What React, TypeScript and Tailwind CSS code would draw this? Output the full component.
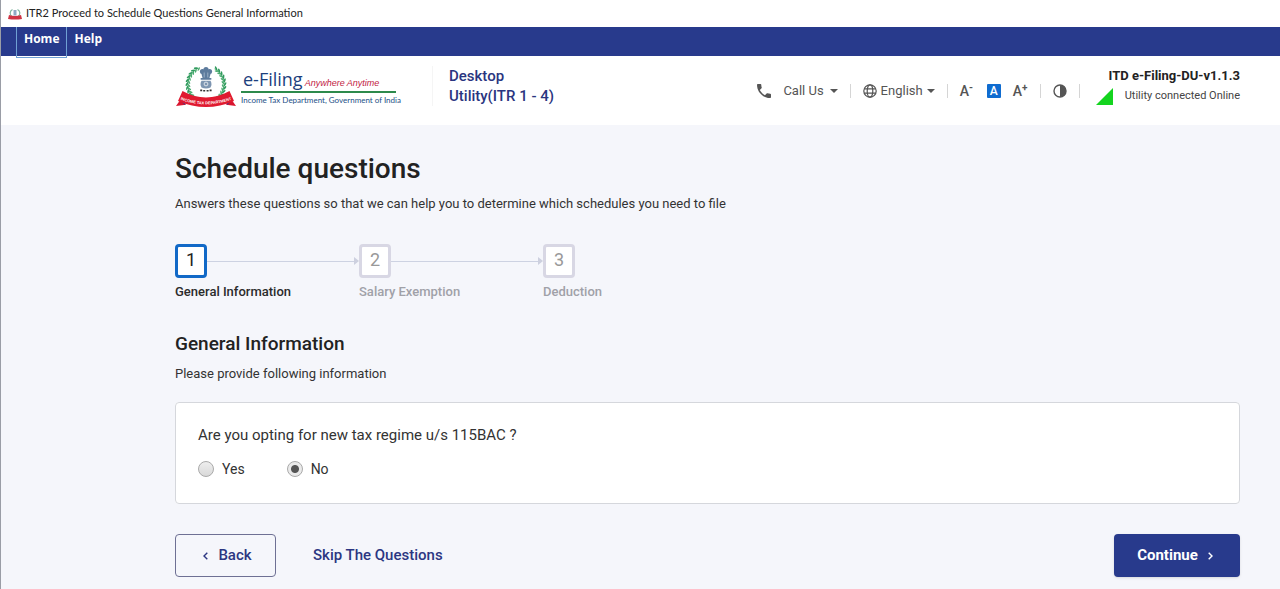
import { useState } from "react";

function Emblem({ className }: { className: string }) {
  const leaves = Array.from({ length: 27 }, (_, i) => 32 + i * 11.4);
  return (
    <svg viewBox="0 0 62 44" className={className} aria-hidden="true">
      <circle cx="31" cy="20.500" r="18" fill="none" stroke="#6fbb8c" strokeWidth="1" strokeDasharray="92 30" transform="rotate(-62 31 20.500)" />
      {leaves.map((deg) => (
        <g key={deg} transform={`rotate(${deg} 31 20.500) translate(31 1.400)`}>
          <ellipse cx="0" cy="0" rx="2.200" ry="0.900" fill="#2f9a5d" transform="rotate(30)" />
          <ellipse cx="0.600" cy="2.800" rx="2" ry="0.800" fill="#4aab70" transform="rotate(-30)" />
        </g>
      ))}
      <g fill="#5d7b9d">
        <circle cx="31" cy="5.600" r="2.600" />
        <circle cx="27.400" cy="7.600" r="2.500" />
        <circle cx="34.600" cy="7.600" r="2.500" />
        <path d="M26 8h10l-1.800 7h-6.400z" />
        <rect x="25.500" y="14" width="11" height="1.800" rx="0.800" />
        <path d="M26.500 16.800q-2 3.500 0 6.700q4.500 2.200 9 0q2-3.200 0-6.700z" opacity="0.800" />
      </g>
      <circle cx="31" cy="20" r="1.900" fill="none" stroke="#fff" strokeWidth="0.700" />
      <path d="M29.200 8.500v5M32.800 8.500v5" stroke="#c6d3e2" strokeWidth="0.600" />
      <path d="M25.200 26.400h2M28.200 26.800h2M31.600 26.800h2M34.600 26.400h2" stroke="#333" strokeWidth="1.600" />
      <path d="M6 33l-1.500 4L1 42l10-1.200z" fill="#d9152f" />
      <path d="M56 33l1.500 4L61 42l-10-1.200z" fill="#d9152f" />
      <path d="M4.800 36l5 5 2-4zM57.200 36l-5 5-2-4z" fill="#4a3a86" />
      <path d="M7.500 27q23.500 13 47 0l4.500 10q-28 12-56 0z" fill="#e01a30" />
      <path id="ribbon" d="M5.500 35.600q25.500 9.400 51 0" fill="none" />
      <text fontSize="3.900" fontWeight="700" fill="#fff" fontFamily="Liberation Sans, sans-serif">
        <textPath href="#ribbon" startOffset="50%" textAnchor="middle">
          INCOME TAX DEPARTMENT
        </textPath>
      </text>
    </svg>
  );
}

function MiniEmblem() {
  return (
    <svg viewBox="0 0 14 12" className="h-3 w-3.5" aria-hidden="true">
      <path d="M4 8.500A4 4 0 0 1 4.500 1.500M10 8.500A4 4 0 0 0 9.500 1.500" fill="none" stroke="#7fb5a0" strokeWidth="1.200" />
      <path d="M5.500 2h3v5.500h-3z" fill="#8fa9c4" />
      <path d="M0 11l1-4q6 2 12 0l1 4q-7 1-14 0z" fill="#cf3444" />
    </svg>
  );
}

function Caret() {
  return (
    <svg viewBox="0 0 8 4" className="h-1 w-2" aria-hidden="true">
      <path d="M0 0h8L4 4z" fill="#555" />
    </svg>
  );
}

function Divider() {
  return <span className="mx-3 h-3.5 w-px bg-[#d5d5d5]" />;
}

function Header() {
  return (
    <header className="flex h-[69px] bg-white pr-10 pl-[174px]">
      <a href="#home" className="flex items-start gap-1 pt-2">
        <Emblem className="h-11 w-[62px]" />
        <span className="flex w-[155px] flex-col pt-1 whitespace-nowrap">
          <span className="flex items-baseline gap-0.5 border-b-2 border-[#2d8a4c] pl-0.5">
            <span className="font-['Open_Sans',sans-serif] text-lg leading-[22px] text-[#1d3f7d]">e-Filing</span>
            <span className="font-['Liberation_Sans',sans-serif] text-[9px] text-[#c2213f] italic">Anywhere Anytime</span>
          </span>
          <span className="font-[Lato,sans-serif] text-[8px] leading-3.5 text-[#1c4f86]">
            Income Tax Department, Government of India
          </span>
        </span>
      </a>
      <div className="mt-2.5 ml-9 h-10 border-l border-[#f5f5f5] pl-4 text-[15px] leading-5 font-medium whitespace-nowrap text-[#2a3580]">
        Desktop
        <br />
        Utility(ITR 1 - 4)
      </div>
      <div className="ml-auto flex h-[69px] items-center text-[13px] text-[#555]">
        <button className="flex items-center">
          <svg viewBox="3 3 18 18" className="mr-3 size-3.5" fill="#555" aria-hidden="true">
            <path d="M6.620 10.790c1.440 2.830 3.760 5.140 6.590 6.590l2.200-2.200c.27-.27.67-.36 1.020-.24 1.120.37 2.330.57 3.570.57.55 0 1 .45 1 1V20c0 .55-.45 1-1 1-9.390 0-17-7.610-17-17 0-.55.45-1 1-1h3.500c.55 0 1 .45 1 1 0 1.250.2 2.450.57 3.570.11.35.03.74-.25 1.020l-2.200 2.200z" />
          </svg>
          <span className="mr-1.5">Call Us</span>
          <Caret />
        </button>
        <Divider />
        <button className="flex items-center">
          <svg viewBox="0 0 14 14" className="mr-1 size-3.5" fill="none" stroke="#555" strokeWidth="1.200" aria-hidden="true">
            <circle cx="7" cy="7" r="6.200" />
            <ellipse cx="7" cy="7" rx="2.800" ry="6.200" />
            <path d="M1.200 4.800h11.600M1.200 9.200h11.600" />
          </svg>
          <span className="mr-1">English</span>
          <Caret />
        </button>
        <Divider />
        <button aria-label="Decrease text size" className="flex w-[15px] items-start text-sm leading-4 font-medium">
          A<span className="text-[10px] leading-2.5 font-bold">-</span>
        </button>
        <button aria-label="Normal text size" className="mx-3 flex size-3.5 items-center justify-center rounded-[1px] bg-[#0f6cd0] text-xs font-medium text-white">
          A
        </button>
        <button aria-label="Increase text size" className="flex w-[15px] items-start text-sm leading-4 font-medium">
          A<span className="text-[10px] leading-2.5 font-bold">+</span>
        </button>
        <Divider />
        <button aria-label="Contrast">
          <svg viewBox="0 0 14 14" className="size-3.5" aria-hidden="true">
            <circle cx="7" cy="7" r="6" fill="none" stroke="#555" strokeWidth="1.400" />
            <path d="M7 1a6 6 0 0 1 0 12z" fill="#555" />
          </svg>
        </button>
        <Divider />
      </div>
      <div className="flex flex-col items-end pt-2.5 pl-1 whitespace-nowrap">
        <span className="text-[13px] leading-5 font-bold text-[#222]">ITD e-Filing-DU-v1.1.3</span>
        <span className="flex items-center gap-3 text-[11px] leading-5 text-[#444]">
          <svg viewBox="0 0 17 17" className="size-[17px]" aria-hidden="true">
            <path d="M17 0v17H0z" fill="#14d41f" />
          </svg>
          Utility connected Online
        </span>
      </div>
    </header>
  );
}

const steps = ["General Information", "Salary Exemption", "Deduction"];

function Stepper() {
  return (
    <ol className="mt-[30px] flex">
      {steps.map((label, i) => (
        <li key={label} className="w-[184px]">
          <div className="flex items-center">
            <span
              className={
                i === 0
                  ? "flex h-[34px] w-8 items-center justify-center rounded-sm border-3 border-[#1269c7] bg-white pb-0.5 text-lg leading-7 text-[#222]"
                  : "flex h-[34px] w-8 items-center justify-center rounded-sm border-3 border-[#d8d7e4] bg-white pb-0.5 text-lg leading-7 text-[#999]"
              }
            >
              {i + 1}
            </span>
            {i < steps.length - 1 && (
              <>
                <span className="h-px flex-1 bg-[#cdd2e2]" />
                <svg viewBox="0 0 5 8" className="h-2 w-[5px]" aria-hidden="true">
                  <path d="M0 0l5 4-5 4z" fill="#cdd0df" />
                </svg>
              </>
            )}
          </div>
          <div className={i === 0 ? "mt-1 text-[13px] leading-5 font-medium text-[#2b2b2b]" : "mt-1 text-[13px] leading-5 font-medium text-[#a0a1a8]"}>
            {label}
          </div>
        </li>
      ))}
    </ol>
  );
}

export default function App() {
  const [regime, setRegime] = useState("No");
  return (
    <div className="min-h-screen border-l border-[#9a9da6] bg-[#f5f6fb] font-[Roboto,sans-serif]">
      <div className="flex h-[27px] items-center gap-1 bg-white pl-[7px] font-[Lato,sans-serif] text-[11px] text-[#222]">
        <MiniEmblem />
        ITR2 Proceed to Schedule Questions General Information
      </div>
      <nav className="flex h-[29px] bg-[#283a8c] pl-[15px] font-['Open_Sans',sans-serif] text-xs leading-6 font-bold text-white">
        <a href="#home" className="z-10 h-[31px] border border-t-0 border-[#6fa0d4] px-[7px]">Home</a>
        <a href="#help" className="px-[7px]">Help</a>
      </nav>
      <Header />
      <main className="pr-10 pl-[174px]">
        <h1 className="pt-6 text-[28px] leading-10 font-medium text-[#222]">Schedule questions</h1>
        <p className="mt-[5px] text-[13px] leading-5 text-[#333]">
          Answers these questions so that we can help you to determine which schedules you need to file
        </p>
        <Stepper />
        <h2 className="mt-[30px] text-[19px] leading-6 font-medium text-[#222]">General Information</h2>
        <p className="mt-2 text-[13px] leading-5 text-[#333]">Please provide following information</p>
        <fieldset className="mt-[18px] rounded-sm border border-[#d5d7dc] bg-white px-[22px] pt-5 pb-6">
          <legend className="float-left w-full text-[15px] leading-6 text-[#333]">
            Are you opting for new tax regime u/s 115BAC ?
          </legend>
          <div className="clear-both flex gap-[42px] pt-3">
            {["Yes", "No"].map((option) => (
              <label key={option} className="flex items-center gap-2 text-sm text-[#333]">
                <input
                  type="radio"
                  name="regime"
                  value={option}
                  checked={regime === option}
                  onChange={() => setRegime(option)}
                  className="size-4 appearance-none rounded-full border border-[#aaa] bg-linear-to-b from-[#eee] to-[#d9d9d9] checked:bg-[radial-gradient(circle,#555_0_3.5px,#eaeaea_4.5px)]"
                />
                {option}
              </label>
            ))}
          </div>
        </fieldset>
        <div className="mt-[30px] flex items-center pb-3 text-[15px] font-medium text-[#2c3682]">
          <button className="flex h-[43px] w-[101px] items-center justify-center gap-2.5 rounded-sm border border-[#6e7094] pl-1">
            <svg viewBox="0 0 5 8" className="h-2 w-[5px]" fill="none" stroke="#2c3682" strokeWidth="1.400" aria-hidden="true">
              <path d="M4.300.7L1 4l3.300 3.300" />
            </svg>
            Back
          </button>
          <a href="#skip" className="ml-[37px]">Skip The Questions</a>
          <button className="ml-auto flex h-[43px] w-[126px] items-center justify-center gap-2.5 rounded-sm bg-[#283a8c] pr-1 font-bold text-white shadow-sm">
            Continue
            <svg viewBox="0 0 5 8" className="h-2 w-[5px]" fill="none" stroke="#fff" strokeWidth="1.400" aria-hidden="true">
              <path d="M.7.7L4 4 .7 7.300" />
            </svg>
          </button>
        </div>
      </main>
    </div>
  );
}
